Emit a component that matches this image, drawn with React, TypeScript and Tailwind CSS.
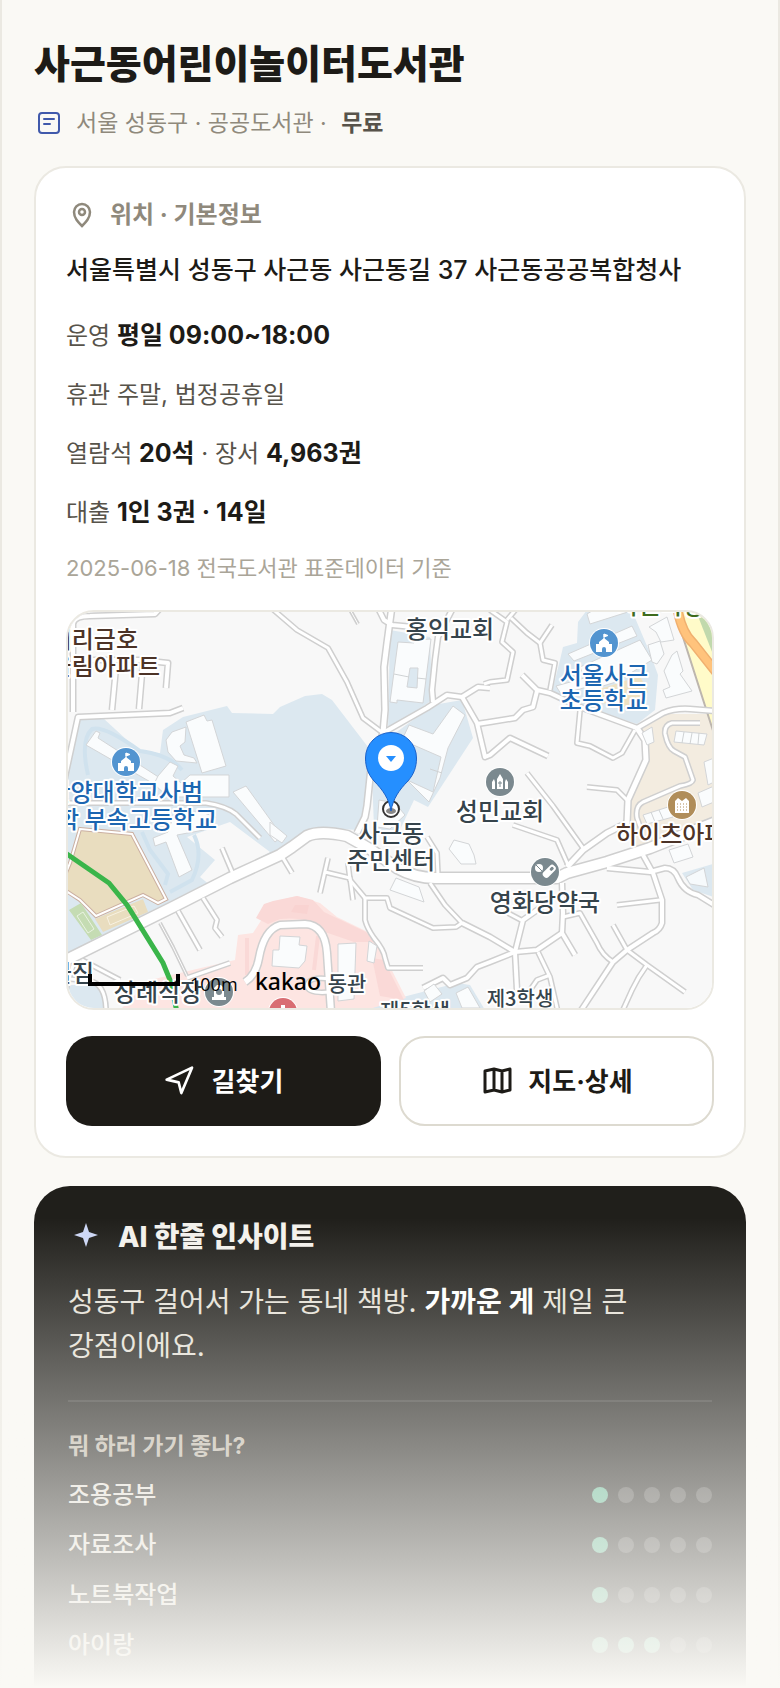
import type { ReactNode } from "react";

const purposes = [
  { label: "조용공부", score: 1 },
  { label: "자료조사", score: 1 },
  { label: "노트북작업", score: 1 },
  { label: "아이랑", score: 3 },
];

const streets: { d: string; w: number }[] = [
  { d: "M60 963L173 907L230 878L280 855L292 847L307 836Q320 830 347 836Q358 842 370 849L397 868Q415 878 435 878H557L567 873L607 862L650 848L716 822", w: 10 },
  { d: "M392 606L387 643L384 667L385 710L383 733", w: 5 },
  { d: "M383 733L371 768L367 806L365 817L357 833", w: 5 },
  { d: "M269 606L297 630L328 648L347 682L363 718L383 733", w: 3 },
  { d: "M349 608L358 624", w: 1 },
  { d: "M378 608L384 620L392 625L413 627", w: 4 },
  { d: "M454 606L438 637L435 660L432 690L433 702", w: 4 },
  { d: "M383 733L427 708L447 695L462 697L478 687L490 688", w: 4 },
  { d: "M462 697L477 723L485 757L490 755L510 738L548 756", w: 4 },
  { d: "M477 724L490 722L515 718L523 710L533 707L537 691", w: 4 },
  { d: "M484 684L490 682L507 680L513 652L502 642L507 622L490 610", w: 3 },
  { d: "M507 620L517 608M511 618L527 633L540 643L552 625", w: 3 },
  { d: "M540 643L543 660L555 663L550 690", w: 3 },
  { d: "M522 675L537 690L550 693L580 707L637 728", w: 4 },
  { d: "M580 711L577 743L590 746L613 758L622 753L635 730", w: 3 },
  { d: "M637 728L663 713Q675 708 690 709L716 711", w: 4 },
  { d: "M637 728L645 740L646 760L628 800L627 823L607 833L583 850L567 867", w: 5 },
  { d: "M587 787L617 790L627 800", w: 3 },
  { d: "M527 773L553 806L583 848", w: 3 },
  { d: "M700 723H672Q664 725 665 734Q668 748 674 751L685 757L693 780Q692 784 680 786L643 802Q635 806 637 818L642 832", w: 3 },
  { d: "M513 825L557 840L568 865", w: 3 },
  { d: "M643 855L653 873L662 900V923Q660 930 653 933L627 950L613 962L580 1012", w: 4 },
  { d: "M607 868L650 872L665 868Q674 868 678 878Q684 892 698 895L716 906", w: 4 },
  { d: "M617 905L660 900", w: 3 },
  { d: "M613 925L627 950L647 965L685 992", w: 3 },
  { d: "M647 965Q638 977 632 990L622 1012", w: 3 },
  { d: "M562 883L563 913L562 933L575 955", w: 4 },
  { d: "M563 917L580 913L597 943Q602 955 613 962", w: 3 },
  { d: "M562 933L537 950L515 952L490 962L477 967L467 978L450 985L443 978L423 988", w: 4 },
  { d: "M462 923L490 937L515 952L523 920L547 903", w: 4 },
  { d: "M508 913L523 921", w: 3 },
  { d: "M515 952L517 990", w: 4 },
  { d: "M538 952L550 977L558 1012M550 975L537 980L528 993", w: 3 },
  { d: "M430 883L445 905L462 923L456 927L433 928L390 908L387 898H365L350 880L348 863", w: 3 },
  { d: "M325 872L350 878L353 900M328 858L320 893", w: 3 },
  { d: "M365 897V920Q367 928 374 938Q384 950 385 958L388 968H423", w: 3 },
  { d: "M427 837L437 853L438 875", w: 3 },
  { d: "M283 858L292 873", w: 3 },
  { d: "M222 848L233 874", w: 3 },
  { d: "M203 898L217 920L215 928L222 937M178 911L200 950", w: 3 },
  { d: "M160 923L173 947L187 976", w: 1 },
  { d: "M60 803H206Q226 806 236 814L260 838", w: 3 },
  { d: "M60 800L78 717L170 713L183 708", w: 4 },
  { d: "M73 712V624Q74 616 90 616L155 614L164 604M90 660L140 660L168 663L166 688", w: 4 },
  { d: "M112 710L116 668M139 709L143 662", w: 4 },
  { d: "M82 960L120 980M74 962L60 1010M187 978L230 963", w: 3 },
  { d: "M245 982Q256 975 259 958Q264 930 280 925L305 924Q325 925 327 953L331 1012", w: 6 },
  { d: "M330 979Q308 976 307 986Q308 994 330 992", w: 3 },
  { d: "M60 978L90 981Q106 984 106 1012", w: 3 },
];

const buildings = [
  "M96 731L100 733L98 738L160 778L154 784L86 745Z",
  "M166 740L172 732L186 727L185 742L180 746L184 755L194 758L197 763L176 761L168 752Z",
  "M186 722L204 715L207 721L212 720L226 766L202 773Z",
  "M158 776L170 762L178 766L173 776L181 783L190 775H229V797H168L154 784Z",
  "M233 792L246 786L282 836L275 842Z",
  "M153 838L168 832L172 820L198 811L216 817L204 830L177 835L192 870L179 877L166 842L155 846Z",
  "M270 822L281 831L287 836L282 843L270 835Z",
  "M398 642L414 643V640L431 639L423 703L397 700L397 703L390 702Z",
  "M409 725L433 734L453 706L465 715L448 748L440 778L429 802L407 780L433 792L441 757L402 740Z",
  "M379 800L395 803L405 815L390 829L377 827Z",
  "M587 614L592 611L631 611L590 624Z",
  "M568 654L632 626L637 636L574 661Z",
  "M580 667L640 640L652 660L616 682L590 690Z",
  "M556 686L588 677L591 686L561 694Z",
  "M649 627L667 617L674 640L661 642L656 632Z",
  "M648 645L660 641L664 654L657 664L652 662Z",
  "M664 671L672 655L677 651L683 671L680 674L692 691L666 698L663 690L670 687Z",
  "M642 733L652 727L654 742L647 745Z",
  "M676 731L707 734L704 745L674 742Z",
  "M704 762L714 758V782L708 785Z",
  "M643 815L668 807L673 817L647 824Z",
  "M698 793L714 786V802L702 807Z",
  "M669 850L688 844L693 857L674 863Z",
  "M454 840L469 844L474 855L476 864L461 864L449 849Z",
  "M396 878L419 887L424 902L390 890Z",
  "M280 936L300 937L299 945L307 946L305 961L299 968L272 966L273 950L279 950Z",
  "M338 944L356 943L354 999L338 1001Z",
  "M369 941L377 946L374 963L367 961Z",
  "M424 991L434 984L442 994L430 1002Z",
  "M456 993L468 987L480 1008H462Z",
];

function IconDot({ x, y, color, children }: { x: number; y: number; color: string; children: ReactNode }) {
  return (
    <g transform={`translate(${x} ${y})`}>
      <circle r="15" fill="#fff" />
      <circle r="14" fill={color} />
      {children}
    </g>
  );
}

function School({ x, y }: { x: number; y: number }) {
  return (
    <IconDot x={x} y={y} color="#5294d0">
      <path d="M0-9V-4M0-9L4-7.500L0-6Z" stroke="#fff" fill="#fff" />
      <path d="M0-5L5-1V1H8V9H2V6A2 2 0 0 0-2 6V9H-8V1H-5V-1Z" fill="#fff" />
    </IconDot>
  );
}

function MapView() {
  return (
    <svg
      viewBox="68 612 644 396"
      preserveAspectRatio="xMidYMid slice"
      className="block size-full"
      role="img"
      aria-label="사근동 주변 지도"
    >
      <rect x="0" y="500" width="800" height="600" fill="#f8f8f8" />

      {/* campus and school grounds */}
      <g fill="#dce8f0">
        <path d="M78 719L103 718L140 752L160 753L163 730L183 717L227 706L232 713L273 714L280 707L305 696L322 694L332 700L368 747L367 800L358 830L320 828L305 834L270 858L60 962V790Z" />
        <path d="M390 630L430 637L432 700L388 732Z" />
        <path d="M390 737L433 705L462 700L473 738L428 807L414 800L398 834L374 828L372 775Z" />
        <path d="M578 622L590 606H630L650 653L658 675L655 710L637 724L583 707L552 692L560 660L563 647L577 643Z" />
        <path d="M682 873L716 863V898L693 890Z" />
        <path d="M365 1010L403 997L457 983L470 985L485 1010Z" />
        <path d="M60 985H98Q108 990 109 1010H60Z" />
      </g>
      <path d="M187 837L230 822L270 852L210 885L200 877L215 860Z" fill="#f8f8f8" />
      <path d="M88 775Q80 740 92 729Q104 725 140 751Q170 755 182 770M142 832L150 850L168 874L165 885M194 835Q204 855 192 880L170 892" fill="none" stroke="#d0e2ee" strokeWidth="4" />

      {/* hospital */}
      <path d="M238 935L253 933L273 902L297 896L320 903L337 917L370 933L383 953L406 998L366 1010H120L150 980L235 960Z" fill="#fde5e2" />
      <path d="M256 918L264 904L273 901L297 896L313 900L324 912L366 932L374 942L354 942L322 931Q310 916 280 919L268 924Z" fill="#fad9d7" />
      <path d="M372 958L384 960L404 1000L380 996Z" fill="#fad9d7" />
      <path d="M291 912L295 905H309L307 914Z" fill="#f9d3d1" />
      <path d="M247 938V975M318 936L314 970" stroke="#fad9d7" strokeWidth="4" />

      {/* apartment complex on the east side */}
      <path d="M637 732L667 714L716 714V822L636 848L630 820V800L648 760L647 740Z" fill="#f3ece0" />
      <path d="M597 690L640 676L648 692L630 708L596 702Z" fill="#eee2c4" />
      <path d="M673 606H716V740Z" fill="#fffbc9" stroke="#bdb6ae" strokeWidth="2" />
      <path d="M694 606H716V662Z" fill="#c1d9ad" />
      <path d="M677 606Q681 632 693 643L716 672" fill="none" stroke="#f0b070" strokeWidth="10" />
      <path d="M677 606Q681 632 693 643L716 672" fill="none" stroke="#ffc37c" strokeWidth="7" />

      {/* sports fields */}
      <path d="M80 829L132 834L166 899L158 903L143 895L96 916L80 900L60 887L70 863Z" fill="#e9ddbf" stroke="#cbb0a2" strokeWidth="4" />
      <path d="M80 829L132 834L166 899L158 903L143 895L96 916L80 900L60 887L70 863Z" fill="none" stroke="#fff" strokeWidth="2" />
      <path d="M95 919L143 899L148 912L103 932Z" fill="#e9ddbf" />
      <path d="M107 917L134 906L138 913L110 925Z" fill="none" stroke="#f8f2e2" />
      <path d="M69 910L81 903L102 935L91 940Z" fill="#c5dcb3" />
      <path d="M77 916L83 912L94 929L88 933Z" fill="none" stroke="#eaf3e2" />

      <g fill="none" strokeLinejoin="round">
        {streets.map((s) => (
          <path key={s.d} d={s.d} stroke="#cfcfcf" strokeWidth={s.w + 3} />
        ))}
        {streets.map((s) => (
          <path key={s.d} d={s.d} stroke="#fff" strokeWidth={s.w} />
        ))}
      </g>

      <g fill="#fafcfd" stroke="#d3d5d7">
        {buildings.map((d) => (
          <path key={d} d={d} />
        ))}
      </g>
      <path d="M410 668H418L417 688L407 687Z" fill="#dce8f0" stroke="#d3d5d7" />
      <path d="M394 674L409 677M417 678L426 679M430 769L442 773M684 732L682 743M692 733L690 744M699 733L698 744M651 812L655 822M659 810L663 819" stroke="#cfd2d4" />
      <path d="M686 877L704 868L708 887L690 884Z" fill="#f6fafc" stroke="#d3d5d7" />

      <path d="M64 852L109 883L127 905L163 963L170 980L177 1012" fill="none" stroke="#3ab54a" strokeWidth="5" />

      <School x={126} y={762} />
      <School x={604} y={643} />
      <IconDot x={500} y={782} color="#7b898f">
        <path d="M-3 7V-3L0-8L3-3V7ZM-8 7V0L-6-3L-5 0V7ZM5 7V0L6-3L8 0V7Z" fill="#fff" />
        <path d="M0-1V5M-2 1H2" stroke="#7b898f" />
      </IconDot>
      <IconDot x={545} y={872} color="#7b898f">
        <g transform="rotate(-45)">
          <rect x="-4" y="-1" width="15" height="7" rx="3" fill="#fff" />
          <rect x="5" y="1" width="4" height="3" rx="1" fill="#7b898f" />
        </g>
        <circle cx="-6" cy="-4" r="4" fill="#fff" />
        <path d="M-9-7L-3-1" stroke="#7b898f" />
      </IconDot>
      <IconDot x={682} y={805} color="#b08d59">
        <path d="M-7 8V-4L-4-7L0-4L4-7L7-4V8Z" fill="#fff" />
        <path d="M-5-1H5M-5 2H5M-5 5H5" stroke="#b08d59" strokeWidth="1" strokeDasharray="1 2" />
      </IconDot>
      <IconDot x={219} y={992} color="#7b898f">
        <path d="M-7 8V5H-5V-4L-2-7H2L5-4V5H7V8Z" fill="#fff" />
        <circle r="3" fill="#7b898f" />
      </IconDot>
      <IconDot x={283} y={1012} color="#d96d72">
        <path d="M-2-7H2V-2H7V2H-7V-2H-2Z" fill="#fff" />
      </IconDot>

      <g
        className="font-['Noto_Sans_CJK_KR',sans-serif] text-[24px] font-medium"
        stroke="#fff"
        strokeWidth="4"
        strokeLinejoin="round"
        style={{ paintOrder: "stroke" }}
      >
        <g fill="#4c3327">
          <text x="138" y="648" textAnchor="end">이리금호</text>
          <text x="160" y="675" textAnchor="end">어울림아파트</text>
          <text x="616" y="843">하이츠아파트</text>
        </g>
        <g fill="#1c66b1">
          <text x="203" y="801" textAnchor="end">한양대학교사범</text>
          <text x="217" y="828" textAnchor="end">대학 부속고등학교</text>
          <text x="604" y="684" textAnchor="middle">서울사근</text>
          <text x="604" y="709" textAnchor="middle">초등학교</text>
        </g>
        <text x="661" y="614" textAnchor="middle" fill="#3e6b1d">사근마당</text>
        <g fill="#36444c" textAnchor="middle">
          <text x="450" y="638">홍익교회</text>
          <text x="500" y="820">성민교회</text>
          <text x="545" y="911">영화당약국</text>
          <text x="391" y="842">사근동</text>
          <text x="391" y="869">주민센터</text>
          <text x="158" y="1001">장례식장</text>
          <text x="72" y="982">불짐</text>
          <g className="text-[21px]">
            <text x="347" y="991">동관</text>
            <text x="415" y="1018">제5학생</text>
          </g>
          <text x="520" y="1006" className="text-[20px]">제3학생</text>
        </g>
      </g>

      {/* marker */}
      <circle cx="391" cy="809" r="8" fill="#fff" stroke="#333" strokeWidth="2" />
      <ellipse cx="391" cy="811" rx="5" ry="3" fill="#888" />
      <path d="M391 811C389 799 383 790 374 781C368 774 365.500 767 365.500 758A25.500 25.500 0 0 1 416.500 758C416.500 767 414 774 408 781C399 790 393 799 391 811Z" fill="#258fff" stroke="#1c62c9" />
      <circle cx="391" cy="758" r="13" fill="#fff" />
      <path d="M386 756H396L391 762Z" fill="#258fff" />

      {/* scale bar */}
      <path d="M90 974V984H178V974" fill="none" stroke="#000" strokeWidth="4" />
      <text x="190" y="991" className="font-['Open_Sans',sans-serif] text-[18px]">100m</text>
      <text x="255" y="990" className="font-['Noto_Sans',sans-serif] text-[23px] font-medium">kakao</text>
    </svg>
  );
}

function Value({ children }: { children: ReactNode }) {
  return <b className="text-[25px] font-bold text-[#1d1b17]">{children}</b>;
}

function Score({ score }: { score: number }) {
  return (
    <span className="flex gap-2.5" role="img" aria-label={`5점 중 ${score}점`}>
      {[1, 2, 3, 4, 5].map((n) => (
        <span key={n} className={`size-4 rounded-full ${n <= score ? "bg-[#5eb490]" : "bg-white/20"}`} />
      ))}
    </span>
  );
}

export default function App() {
  return (
    <div className="relative min-h-screen border-x-2 border-[#ebe9e2] bg-[#faf9f5] px-8 pt-[34px] font-['Inter','Noto_Sans_CJK_KR',sans-serif] text-[#1d1b17]">
      <h1 className="text-[39px] leading-[60px] font-extrabold">사근동어린이놀이터도서관</h1>
      <p className="mt-[10px] flex items-center gap-3 text-[23px] leading-[38px] text-[#8f897c]">
        <svg viewBox="0 0 30 30" className="size-[30px]" fill="none" stroke="#4059ab" strokeWidth="2" strokeLinecap="round">
          <rect x="5" y="5" width="20" height="20" rx="3" />
          <path d="M10 11H20M10 16H16" />
        </svg>
        <span>
          서울 성동구 · 공공도서관 · <b className="ml-2 font-bold text-[#57534a]">무료</b>
        </span>
      </p>

      <section className="mt-6 rounded-[32px] border-2 border-[#ebe9e2] bg-white p-[30px]">
        <h2 className="flex items-center gap-3 text-[24px] leading-[34px] font-bold text-[#8f897c]">
          <svg viewBox="0 0 32 32" className="size-8" fill="none" stroke="currentColor" strokeWidth="2.5">
            <path d="M16 27C20 23 24 19 24 13A8 8 0 0 0 8 13C8 19 12 23 16 27Z" />
            <circle cx="16" cy="13" r="3" />
          </svg>
          위치 · 기본정보
        </h2>
        <p className="mt-4 text-[25px] leading-[44px] font-medium">서울특별시 성동구 사근동 사근동길 37 사근동공공복합청사</p>
        <div className="mt-6 space-y-5 text-[24px] leading-[39px] text-[#57534a]">
          <p>운영 <Value>평일 09:00~18:00</Value></p>
          <p>휴관 주말, 법정공휴일</p>
          <p>열람석 <Value>20석</Value> · 장서 <Value>4,963권</Value></p>
          <p>대출 <Value>1인 3권 · 14일</Value></p>
        </div>
        <p className="mt-4 text-[22px] leading-[40px] text-[#aaa598]">2025-06-18 전국도서관 표준데이터 기준</p>
        <div className="mt-[22px] h-[400px] overflow-hidden rounded-[28px] border-2 border-[#ebe9e2]">
          <MapView />
        </div>
        <div className="mt-[26px] grid grid-cols-2 gap-[18px] text-[26px] font-bold">
          <button type="button" className="flex h-[90px] items-center justify-center gap-4 rounded-[26px] bg-[#1d1b17] text-white">
            <svg viewBox="0 0 24 24" className="size-8" fill="none" stroke="currentColor" strokeWidth="2" strokeLinejoin="round">
              <path d="M2 11L21 2L13 21L11 13Z" />
            </svg>
            길찾기
          </button>
          <button type="button" className="flex h-[90px] items-center justify-center gap-4 rounded-[26px] border-2 border-[#dddad0]">
            <svg viewBox="0 0 32 32" className="size-8" fill="none" stroke="currentColor" strokeWidth="3" strokeLinejoin="round">
              <path d="M5 6L14 4L22 6L30 4V25L22 27L14 25L5 27ZM14 4V25M22 6V27" />
            </svg>
            지도·상세
          </button>
        </div>
      </section>

      <section className="mt-7 rounded-t-[36px] bg-[#201f1b] px-[34px] pt-8 text-[#e4e0d8]">
        <h2 className="flex items-center gap-4 text-[28px] leading-[38px] font-extrabold text-[#f3f1ec]">
          <svg viewBox="0 0 34 34" className="size-[34px]" fill="#ccd6f5">
            <path d="M18 3L21 12L30 15L21 18L18 27L15 18L6 15L15 12Z" />
          </svg>
          AI 한줄 인사이트
        </h2>
        <p className="mt-6 text-[28px] leading-[44px] text-[#e4e0d6]">
          성동구 걸어서 가는 동네 책방. <b className="font-bold text-white">가까운 게</b> 제일 큰
          <br />
          강점이에요.
        </p>
        <hr className="mt-8 border-t-2 border-white/10" />
        <h3 className="mt-6 text-[23px] leading-[40px] font-bold text-[#bcb4a6]">뭐 하러 가기 좋나?</h3>
        <ul className="mt-1 pb-4 text-[24px] font-medium">
          {purposes.map((p) => (
            <li key={p.label} className="flex h-[50px] items-center justify-between">
              {p.label}
              <Score score={p.score} />
            </li>
          ))}
        </ul>
      </section>
      <div className="pointer-events-none absolute -inset-x-0.5 bottom-0 h-[470px] bg-linear-to-b from-[#faf9f5]/0 to-[#faf9f5]" />
    </div>
  );
}
